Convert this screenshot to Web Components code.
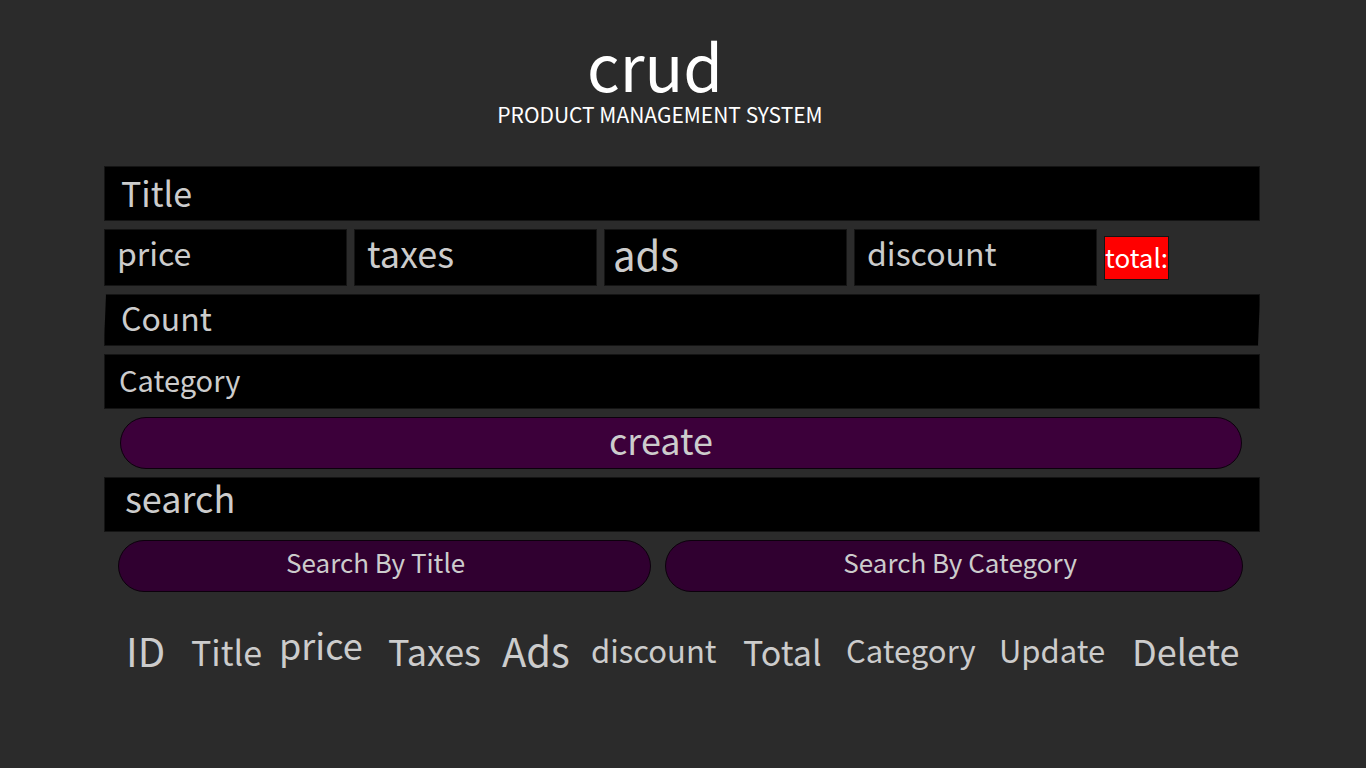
<!DOCTYPE html>
<html lang="en">
<head>
<meta charset="utf-8">
<meta name="viewport" content="width=device-width, initial-scale=1">
<title>crud - Product Management System</title>
<style>
  body {
    margin: 0;
    min-height: 100vh;
    background: #2b2b2b;
    color: #ccc;
    font-family: "Noto Sans CJK SC", "Noto Sans", sans-serif;
  }
</style>
</head>
<body>
<crud-app></crud-app>

<script>
function define(name, html, setup) {
  const template = document.createElement('template');
  template.innerHTML = html;
  customElements.define(name, class extends HTMLElement {
    constructor() {
      super();
      this.attachShadow({ mode: 'open' }).append(template.content.cloneNode(true));
    }
    connectedCallback() {
      if (setup) setup(this, this.shadowRoot);
    }
  });
}

define('crud-header', `
  <style>
    :host { display: block; padding-right: 44px; text-align: center; color: #fff; }
    h1, p { margin: 0; font-weight: 400; }
    h1 { font-size: 64px; line-height: 64px; padding-right: 10px; }
    p { font-size: 21px; line-height: 32px; margin-top: 2px; }
  </style>
  <header>
    <h1><slot name="name"></slot></h1>
    <p><slot></slot></p>
  </header>`);

define('crud-field', `
  <style>
    :host { display: block; min-width: 0; }
    input {
      display: block;
      box-sizing: border-box;
      width: 100%;
      height: var(--field-height, 55px);
      margin: 0;
      padding: 0 16px var(--field-lift, 0px) var(--field-inset, 14px);
      border: 1px solid #141414;
      border-radius: 0;
      outline: 0;
      background: #000;
      color: #ccc;
      font: inherit;
      line-height: 48px;
    }
    input::placeholder { color: #ccc; opacity: 1; }
    :host([slanted]) input {
      clip-path: polygon(2px 0, 100% 0, calc(100% - 2px) 100%, 0 100%);
    }
  </style>
  <input type="text">`, (host, root) => {
    const input = root.querySelector('input');
    input.placeholder = host.getAttribute('label');
    input.setAttribute('aria-label', host.getAttribute('label'));
  });

define('crud-button', `
  <style>
    :host { display: block; min-width: 0; }
    button {
      display: block;
      box-sizing: border-box;
      width: 100%;
      height: 52px;
      margin: 0;
      padding: 0 var(--pad-right, 0px) 8px var(--pad-left, 0px);
      border: 1px solid #0c000c;
      border-radius: 26px;
      background: var(--button-color, #300030);
      color: #ccc;
      font: inherit;
      line-height: 40px;
      cursor: pointer;
    }
  </style>
  <button type="button"><slot></slot></button>`);

define('crud-total', `
  <style>
    :host { display: block; }
    output {
      display: block;
      box-sizing: border-box;
      height: 44px;
      border: 1px solid #141414;
      background: #f00;
      color: #fff;
      line-height: 40px;
      white-space: nowrap;
    }
  </style>
  <output><slot></slot></output>`);

define('crud-table', `
  <style>
    :host { display: block; }
    table { width: 100%; table-layout: fixed; border-collapse: collapse; }
    th {
      height: 56px;
      padding: 0;
      text-align: left;
      vertical-align: top;
      font-weight: 400;
      line-height: 48px;
      white-space: nowrap;
    }
    .s { font-size: 31px; }
    .m { font-size: 34px; }
    .l { font-size: 36px; }
    .xl { font-size: 40px; }
    .low { line-height: 52px; }
    .high { line-height: 36px; }
  </style>
  <table>
    <colgroup>
      <col style="width:65px"><col style="width:88px"><col style="width:109px">
      <col style="width:114px"><col style="width:89px"><col style="width:152px">
      <col style="width:103px"><col style="width:153px"><col style="width:133px">
      <col style="width:107px">
    </colgroup>
    <thead>
      <tr>
        <th scope="col" class="xl">ID</th>
        <th scope="col" class="m low">Title</th>
        <th scope="col" class="l high">price</th>
        <th scope="col" class="l">Taxes</th>
        <th scope="col" class="xl">Ads</th>
        <th scope="col" class="s">discount</th>
        <th scope="col" class="m low">Total</th>
        <th scope="col" class="s">Category</th>
        <th scope="col" class="s">Update</th>
        <th scope="col" class="l">Delete</th>
      </tr>
    </thead>
  </table>`);

define('crud-app', `
  <style>
    :host { display: block; padding: 32px 106px 32px 104px; }
    form { display: grid; gap: 8px; margin-top: 36px; }
    .prices {
      display: grid;
      grid-template-columns: repeat(4, minmax(0, 1fr)) 65px;
      gap: 7px;
      align-items: center;
      padding-right: 91px;
      --field-height: 57px;
    }
    .create { padding: 0 18px 0 16px; font-size: 36px; --button-color: #3c003a; --pad-right: 40px; }
    .searches {
      display: grid;
      grid-template-columns: minmax(0, 12fr) minmax(0, 13fr);
      gap: 14px;
      padding: 0 17px 0 14px;
      font-size: 26px;
    }
    .by-title { --pad-right: 18px; }
    .by-category { --pad-left: 12px; }
    .title { font-size: 34px; --field-lift: 2px; --field-inset: 16px; }
    .price { font-size: 32px; --field-lift: 12px; --field-inset: 12px; }
    .taxes { font-size: 36px; --field-lift: 12px; --field-inset: 12px; }
    .ads { font-size: 40px; --field-lift: 8px; --field-inset: 8px; }
    .discount { font-size: 32px; --field-lift: 12px; --field-inset: 12px; }
    .count { font-size: 32px; --field-lift: 6px; --field-inset: 16px; --field-height: 52px; }
    .category { font-size: 29px; --field-lift: 6px; }
    .search { font-size: 36px; --field-lift: 16px; --field-inset: 20px; }
    crud-total { font-size: 26px; }
    crud-table { margin: 34px 0 0 22px; padding-right: 21px; }
  </style>
  <crud-header><span slot="name">crud</span>PRODUCT MANAGEMENT SYSTEM</crud-header>
  <main>
    <form>
      <crud-field class="title" label="Title"></crud-field>
      <div class="prices">
        <crud-field class="price" label="price"></crud-field>
        <crud-field class="taxes" label="taxes"></crud-field>
        <crud-field class="ads" label="ads"></crud-field>
        <crud-field class="discount" label="discount"></crud-field>
        <crud-total>total:</crud-total>
      </div>
      <crud-field class="count" label="Count" slanted></crud-field>
      <crud-field class="category" label="Category"></crud-field>
      <crud-button class="create">create</crud-button>
      <crud-field class="search" label="search"></crud-field>
      <div class="searches">
        <crud-button class="by-title">Search By Title</crud-button>
        <crud-button class="by-category">Search By Category</crud-button>
      </div>
    </form>
    <crud-table></crud-table>
  </main>`);
</script>
</body>
</html>
